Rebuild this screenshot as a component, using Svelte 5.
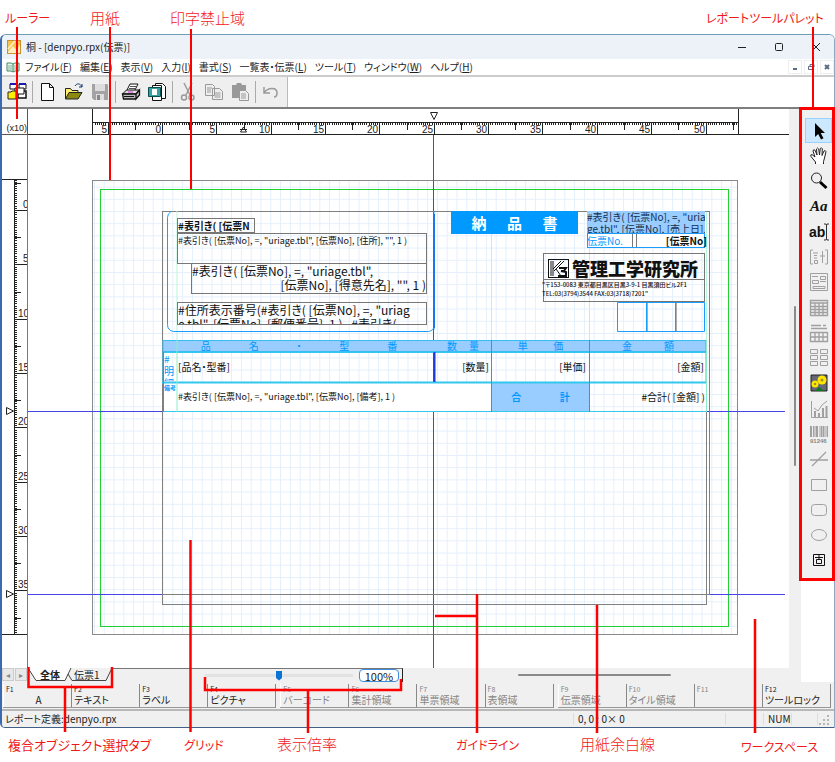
<script>
  const menus = [
    ['ファイル', 'F'], ['編集', 'E'], ['表示', 'V'], ['入力', 'I'], ['書式', 'S'],
    ['一覧表・伝票', 'L'], ['ツール', 'T'], ['ウィンドウ', 'W'], ['ヘルプ', 'H']
  ];

  const keyGroups = [
    [['F1', 'A', 'center'], ['F2', 'テキスト', ''], ['F3', 'ラベル', ''], ['F4', 'ピクチャ', '']],
    [['F5', 'バーコード', 'off'], ['F6', '集計領域', 'off'], ['F7', '単票領域', 'off'], ['F8', '表領域', 'off']],
    [['F9', '伝票領域', 'off'], ['F10', 'タイル領域', 'off'], ['F11', '', 'off'], ['F12', 'ツールロック', '']]
  ];

  const tools = [
    '選択', '移動', 'ズーム', 'ラベル', 'テキスト', '集計', '単票領域', '表領域', '伝票領域',
    'タイル領域', 'ピクチャ', 'グラフ', 'バーコード', '直線', '四角形', '角丸四角形', '楕円', '固定'
  ];

  // Ruler geometry: one numbered step is five units, with 25 small ticks in it.
  const step = 54.35;
  const hTicks = [];
  for (let i = -32; i <= 264; i++) hTicks.push(162 + (i * step) / 25);
  const hHalf = Array.from({ length: 12 }, (_, i) => 162 + (i - 0.5) * step).filter((x) => x < 738);
  const hMajor = Array.from({ length: 12 }, (_, i) => ({ x: 162 + (i - 1) * step, n: Math.abs((i - 1) * 5) }));
  const vTicks = [];
  for (let i = -14; i <= 195; i++) vTicks.push(210 + (i * step) / 25);
  const vMajor = Array.from({ length: 8 }, (_, i) => ({ y: 210 + i * step, n: i * 5 }));
  const vHalf = Array.from({ length: 9 }, (_, i) => 210 + (i - 0.5) * step).filter((y) => y < 634);

  // Text objects of the report: x, y, width, height on the design surface.
  const objects = [
    { x: 177, y: 218, w: 78, h: 15, c: 'f10 bold boxed', t: ['#表引き( [伝票N'] },
    { x: 177, y: 233, w: 250, h: 31, c: 'f9 boxed', t: ['#表引き( [伝票No], =, "uriage.tbl", [伝票No], [住所], "", 1 )'] },
    { x: 191, y: 263, w: 236, h: 31, c: 'f12 boxed', t: ['#表引き( [伝票No], =, "uriage.tbl",'], r: '[伝票No], [得意先名], "", 1 )' },
    { x: 177, y: 302, w: 250, h: 23, c: 'f12 boxed', t: ['#住所表示番号(#表引き( [伝票No], =, "uriag', 'e.tbl", [伝票No], [郵便番号], 1 ) , #表引き('] },
    { x: 451, y: 211, w: 127, h: 23, c: 'title', t: ['納', '品', '書'] },
    { x: 587, y: 211, w: 118, h: 22, c: 'f10 date', t: ['#表引き( [伝票No], =, "uria', 'ge.tbl", [伝票No], [売上日],'] },
    { x: 587, y: 234, w: 45, h: 13, c: 'f10 blue', t: ['伝票No.'] },
    { x: 637, y: 234, w: 70, h: 13, c: 'f10 bold right', t: ['[伝票No]'] },
    { x: 572, y: 257, w: 132, h: 23, c: 'company', t: ['管理工学研究所'] },
    { x: 542, y: 280, w: 164, h: 10, c: 'f6', t: ['"〒153-0083 東京都目黒区目黒3-9-1 目黒須田ビル2F1'] },
    { x: 542, y: 289, w: 164, h: 10, c: 'f6', t: ['TEL:03(3794)3544 FAX:03(3718)7201"'] },
    { x: 163, y: 341, w: 272, h: 10, c: 'head', t: ['品', '名', '・', '型', '番'] },
    { x: 435, y: 341, w: 56, h: 10, c: 'head', t: ['数', '量'] },
    { x: 492, y: 341, w: 97, h: 10, c: 'head', t: ['単', '価'] },
    { x: 590, y: 341, w: 116, h: 10, c: 'head', t: ['金', '額'] },
    { x: 164, y: 353, w: 13, h: 28, c: 'side', t: ['#', '明', '細'] },
    { x: 178, y: 353, w: 200, h: 28, c: 'f10 cell', t: ['[品名・型番]'] },
    { x: 440, y: 353, w: 49, h: 28, c: 'f10 cell right', t: ['[数量]'] },
    { x: 500, y: 353, w: 86, h: 28, c: 'f10 cell right', t: ['[単価]'] },
    { x: 600, y: 353, w: 104, h: 28, c: 'f10 cell right', t: ['[金額]'] },
    { x: 164, y: 383, w: 13, h: 9, c: 'f6 blue bold', t: ['備考'] },
    { x: 178, y: 383, w: 300, h: 28, c: 'f9 cell', t: ['#表引き( [伝票No], =, "uriage.tbl", [伝票No], [備考], 1 )'] },
    { x: 492, y: 383, w: 97, h: 28, c: 'sum', t: ['合', '計'] },
    { x: 600, y: 383, w: 105, h: 28, c: 'f10 cell right', t: ['#合計( [金額] )'] }
  ];

  const captions = [
    { x: 5, y: 8, t: 'ルーラー', c: 'kana' }, { x: 90, y: 8, t: '用紙' }, { x: 170, y: 8, t: '印字禁止域' },
    { x: 706, y: 8, t: 'レポートツールパレット', c: 'kana' }, { x: 8, y: 735, t: '複合オブジェクト選択タブ', c: 'mixed' },
    { x: 184, y: 735, t: 'グリッド', c: 'kana' }, { x: 277, y: 734, t: '表示倍率' },
    { x: 456, y: 735, t: 'ガイドライン', c: 'kana' }, { x: 580, y: 734, t: '用紙余白線' },
    { x: 741, y: 737, t: 'ワークスペース', c: 'kana' }
  ];

  let zoom = $state(100);
  let active = $state(0);
</script>

<div class="page">
  <div class="window">
    <header class="titlebar">
      <svg width="14" height="14" viewBox="0 0 14 14"><rect x=".5" y=".5" width="13" height="13" fill="#f7c64c" stroke="#c8912c" /><path d="M1 12 6 6l3 4 4-5v8H1z" fill="#fff1c4" /><path d="M1 9 8 1" stroke="#fff3d0" stroke-width="1.5" /></svg>
      <span class="name">桐 - [denpyo.rpx(伝票)]</span>
      <div class="winbtns">
        <button aria-label="最小化"><svg width="10" height="10" viewBox="0 0 10 10"><path d="M1 5.5h8" /></svg></button>
        <button aria-label="最大化"><svg width="10" height="10" viewBox="0 0 10 10"><rect x="1.5" y="1.5" width="7" height="7" rx="1" /></svg></button>
        <button aria-label="閉じる"><svg width="10" height="10" viewBox="0 0 10 10"><path d="m1 1 8 8M9 1 1 9" /></svg></button>
      </div>
    </header>

    <nav class="menubar">
      <svg width="14" height="12" viewBox="0 0 14 12"><path d="M1 2h4l2 1 2-1h4v8H9l-2 1-2-1H1zM7 3v8" fill="#e9f6ee" stroke="#3f8a62" /><path d="M3 4v5M5 4v5M9 4v5M11 4v5" stroke="#86b79c" /></svg>
      {#each menus as [label, key]}
        <button>{label}(<u>{key}</u>)</button>
      {/each}
      <div class="mdi">
        <button aria-label="子ウィンドウ最小化"><svg width="8" height="8" viewBox="0 0 8 8"><path d="M2 6h4" /></svg></button>
        <button aria-label="子ウィンドウ復元"><svg width="8" height="8" viewBox="0 0 8 8"><path d="M3 3V1.5h4V4H6M1.5 3.5h4v3h-4z" stroke-width="1" /></svg></button>
        <button aria-label="子ウィンドウを閉じる"><svg width="8" height="8" viewBox="0 0 8 8"><path d="m2 2 4 4M6 2 2 6" /></svg></button>
      </div>
    </nav>

    <div class="toolbar">
      <div class="tools">
        <button aria-label="ウィンドウ選択"><svg width="20" height="20" viewBox="0 0 20 20"><path d="M3 2h7v5H3zM12 2h7v5h-7z" fill="#fff" stroke="#111" /><path d="M3 1h7v2H3zM12 1h7v2h-7z" fill="#1a1ab0" /><path d="M11 9h8v7h-8z" fill="#fff" stroke="#111" stroke-width="1.5" /><path d="M8 6h9v6H8z" fill="#fff" stroke="#111" /><path d="M1 10h3l1-1h4v8H1z" fill="#ffee00" stroke="#222" /></svg></button>
        <i></i>
        <button aria-label="新規"><svg width="20" height="20" viewBox="0 0 20 20"><path d="M3.500 1.500h8l4 4v13h-12zM11.500 1.500v4h4" fill="#fff" stroke="#111" /></svg></button>
        <button aria-label="開く"><svg width="20" height="20" viewBox="0 0 20 20"><path d="M1.500 17V6.500h5l1.500 2h6V11" fill="#ffef70" stroke="#222" /><path d="m1.500 17 3.500-6.500h13L14 17z" fill="#8a8a10" stroke="#222" /><path d="M11 4c2-3 5-3 7 1m0-3v3h-3" fill="none" stroke="#103070" /></svg></button>
        <button aria-label="保存" disabled><svg width="20" height="20" viewBox="0 0 20 20"><path d="M2 2h15l1 1v15H4l-2-2z" fill="#a3a3a3" /><path d="M5 2h10v7H5zM6 12h8v6H6z" fill="#ddd" /><path d="M7 13h3v5H7z" fill="#888" /></svg></button>
        <i></i>
        <button aria-label="印刷"><svg width="20" height="20" viewBox="0 0 20 20"><path d="M6 8 9 2h8l-3 6" fill="#fff" stroke="#111" /><path d="m9 4.500 6 0M8 6.500h6" stroke="#555" /><path d="m1.500 12 4-4H18l-3 4z" fill="#ddd" stroke="#111" /><path d="M1.500 12H15v5H2.500zM15 12l3.500-4v5L15 17z" fill="#bbb" stroke="#111" stroke-width="1.300" /><path d="M3 14.500h10" stroke="#111" /><path d="M7 10h5" stroke="#d33ad3" /></svg></button>
        <button aria-label="プレビュー"><svg width="20" height="20" viewBox="0 0 20 20"><path d="M8.500 1.500h7l3 3v12h-10z" fill="#fff" stroke="#111" /><path d="M5.500 3.500h9v15h-9z" fill="#fff" stroke="#111" /><path d="M1.500 5.500h12v9h-12z" fill="#38a0a0" stroke="#0a5050" /><path d="M5 7h5v6H5z" fill="#fff" /></svg></button>
        <i></i>
        <button aria-label="切り取り" disabled><svg width="20" height="20" viewBox="0 0 20 20" fill="none" stroke="#9a9a9a" stroke-width="1.500"><path d="M6 1l6 12M14 1 8 13" /><circle cx="6" cy="15.500" r="2.500" /><circle cx="13.500" cy="15.500" r="2.500" /></svg></button>
        <button aria-label="コピー" disabled><svg width="20" height="20" viewBox="0 0 20 20" fill="#eee" stroke="#9a9a9a"><path d="M1.500 2.500h7l2 2v9h-9zM8.500 6.500h7l3 3v8h-10z" /><path d="M3 6h5M3 8h4M3 10h4M10.500 11h6M10.500 13h6M10.500 15h6" /></svg></button>
        <button aria-label="貼り付け" disabled><svg width="20" height="20" viewBox="0 0 20 20"><path d="M2 3h4l1-2h4l1 2h4v13H2z" fill="#999" /><path d="M9.500 8.500h6l3 3v7h-9z" fill="#eee" stroke="#999" /><path d="M11 12h5M11 14h5M11 16h5" stroke="#999" /></svg></button>
        <i></i>
        <button aria-label="元に戻す" disabled><svg width="20" height="20" viewBox="0 0 20 20" fill="none" stroke="#9a9a9a" stroke-width="1.500"><path d="M3 5v6h6M3 11c4-6 13-6 13 0 0 2-1 4-3 4" /></svg></button>
      </div>
    </div>

    <div class="work">
      <main class="designer">
        <div class="hrow">
          <div class="corner">(x10)</div>
          <div class="hruler">
            <svg width="760" height="26" viewBox="28 109 760 26" shape-rendering="crispEdges">
              <path d="M92.500 109v25M738.500 109v25M92 122.500h646" class="rule" />
              {#each hTicks as x}<path d="M{Math.round(x) + 0.5} 122v3" class="rule" />{/each}
              {#each hHalf as x}<path d="M{Math.round(x) + 0.5} 122v8" class="rule" />{/each}
              {#each hMajor as m}
                <path d="M{Math.round(m.x) + 0.5} 122v12" class="rule" />
                <text x={Math.round(m.x) - 1} y="133" text-anchor="end">{m.n}</text>
              {/each}
              <path d="M430.500 112.500h7l-3.500 7z" class="mark" />
              <path d="M240.500 132h6l-3-5zM240 129.500h7" class="mark" />
            </svg>
          </div>
        </div>

        <div class="mid">
          <div class="vruler">
            <svg width="26" height="533" viewBox="2 135 26 533" shape-rendering="crispEdges">
              <path d="M2 179.500h26M2 634.500h26M14.500 179v455" class="rule" />
              {#each vTicks as y}<path d="M14 {Math.round(y) + 0.5}h3" class="rule" />{/each}
              {#each vHalf as y}<path d="M14 {Math.round(y) + 0.5}h7" class="rule" />{/each}
              {#each vMajor as m}
                <path d="M14 {Math.round(m.y) + 0.5}h14" class="rule" />
                <text x={m.n < 10 ? 23 : 18} y={Math.round(m.y) - 2}>{m.n}</text>
              {/each}
              <path d="M6.500 407.500v7l7-3.500zM6.500 590.500v7l7-3.500z" class="mark" />
            </svg>
          </div>

          <div class="canvas">
            <svg class="surface" width="760" height="533" viewBox="28 135 760 533" fill="none">
              <defs>
                <pattern id="grid" x="162.500" y="211" width="9.800" height="12.200" patternUnits="userSpaceOnUse">
                  <path d="M.5 0v12.200M0 .5h9.800" stroke="#e4effc" />
                </pattern>
              </defs>
              <rect x="92.500" y="180.500" width="645" height="454" fill="url(#grid)" stroke="#8a8a8a" />
              <rect x="100.500" y="189.500" width="628" height="437" stroke="#22d233" />
              <path d="M28 411.500h757M28 594.500h757M433.500 135v533" stroke="#4646e8" />
              <rect x="162.500" y="211.500" width="544" height="393" stroke="#808080" />
              <path d="M162 594.500h547M709.500 211v384M706 211.500h3" stroke="#808080" />
              <path d="M177 211v130M491.500 233v107M589.500 248v92M706.500 212v128" stroke="#b6f5d8" />

              <path d="M171 211.500q-3.500 2-3.500 6v107q0 6 6 7h255q5-1 5.500-5M434 211v119" stroke="#1a9cff" />
              <path d="M434 214v114" stroke="#1478f0" stroke-width="2" />
              <rect x="587.500" y="233.500" width="117" height="14" fill="#fff" stroke="#1a9cff" />
              <path d="M632.500 234v13M636.500 234v13" stroke="#777" />
              <rect x="543.500" y="253.500" width="161" height="48" stroke="#777" />
              <path d="M543 279.500h161" stroke="#777" />
              <g stroke="#111">
                <rect x="548.500" y="259.500" width="20" height="18" />
                <path d="M551 261v15M553 261v15M553 269l8-8M554 271l10-10M556 269l5 7" />
                <path d="M559 268h7l-2 3h-3l5 1v4h-8" stroke-width="2" />
              </g>
              <path d="M617.500 302.500h87v29h-87zM646.500 302v29M675.500 302v29" stroke="#1a9cff" />
              <path d="M647.500 302v29M676.500 302v29" stroke="#777" stroke-opacity=".6" />

              <rect x="163" y="340.500" width="543" height="11" fill="#99ccff" stroke="#35bdf5" />
              <rect x="163" y="352.500" width="543" height="30" stroke="#35c8ee" />
              <path d="M163 383h328v28H163z" fill="#fff" />
              <path d="M492 383h97v28h-97z" fill="#99ccff" />
              <path d="M162 382.500h545" stroke="#35c8ee" stroke-width="2" />
              <path d="M163 411.500h543" stroke="#35c8ee" />
              <path d="M706.500 340v72M177 340v72" stroke="#8cecc8" />
              <path d="M163.500 352v60M491.500 340v72M589.500 340v72" stroke="#1a9cff" />
              <path d="M434.500 352v30" stroke="#2038e0" stroke-width="2" />
            </svg>
            {#each objects as o}
              <div class="obj {o.c}" style="left:{o.x - 28}px;top:{o.y - 135}px;width:{o.w}px;height:{o.h}px">
                {#each o.t as line}<span>{line}</span>{/each}
                {#if o.r}<span class="second">{o.r}</span>{/if}
              </div>
            {/each}
          </div>
        </div>

        <div class="bottom">
          <div class="navs"><button aria-label="前のタブ">◂</button><button aria-label="次のタブ">▸</button></div>
          <div class="tabs">
            <svg width="85" height="14" viewBox="0 0 85 14"><path d="M0 0 8 12.500h29L44 0z" fill="#fff" /><path d="M0 0 8 12.500h29L43 0" fill="none" stroke="#444" /><path d="m40 6 4 6.500h34L84 0" fill="none" stroke="#444" /></svg>
            <button class="t1">全体</button><button class="t2">伝票1</button>
          </div>
          <div class="zoomer">
            <input type="range" min="0" max="200" bind:value={zoom} aria-label="表示倍率" />
            <button class="pct">{zoom}%</button>
          </div>
          <div class="hscroll"><b></b></div>
        </div>
      </main>

      <div class="vscroll"><b></b></div>

      <aside class="palette">
        <div class="strip">
          {#each tools as name, i}
            <button aria-label={name} class:on={active === i} onclick={() => (active = i)}>
              <svg width="20" height="20" viewBox="0 0 20 20" fill="none" stroke="#a0a0a0">
                {#if i === 0}<path d="M6 2v14l3.200-3 2.800 5.500 2.500-1.200-2.800-5.300H16z" fill="#000" stroke="none" />
                {:else if i === 1}<path d="M6.500 18v-2L2 10.500q-.8-2 1-2L6 11 4 5q.3-2 2-.8L8 9 7.500 3q1-2 2.200 0l.8 6 .8-6.500q1.200-1.500 2 .3l-.3 6.700L15 5q1.500-1 2 .6L15.500 12l-1 3.500V18" fill="#fff" stroke="#222" />
                {:else if i === 2}<circle cx="7.500" cy="7" r="5" stroke="#222" /><path d="m11 11 6.500 6" stroke="#000" stroke-width="3" />
                {:else if i === 3}<text x="1" y="15" class="aa">Aa</text>
                {:else if i === 4}<text x="0" y="15" class="ab">ab</text><path d="M15 2h2l.5 1 .5-1h2M17.500 3v14M15 18h2l.5-1 .5 1h2" stroke="#333" />
                {:else if i === 5}<path d="M4 3H1.500v14H4M16 3h2.500v14H16M4 6h5M5 8.500h3M5 11h3M5.500 13.500h3v3h-3zM11 9h5M13.500 4v12" />
                {:else if i === 6}<path d="M1.500 1.500h17v17h-17zM3 4.500h6M3.500 8.500h6v3h-6zM11.500 4.500h5v3h-5zM11 9.500h6M4 14.500h12v2H4z" />
                {:else if i === 7}<path d="M1.500 2.500h17v15h-17zM1.500 5h17M1.500 8.500h17M1.500 11.500h17M1.500 14.500h17M6 5v12M10 5v12M14 5v12" stroke-width="1.300" />
                {:else if i === 8}<path d="M2 2.500h10M14 2.500h3M2 5.500h16M1.500 9.500h17v9h-17zM1.500 14h17M6 9v9M10 9v9M14 9v9" stroke-width="1.300" />
                {:else if i === 9}<path d="M1.500 1.500h7v4h-7zM11.500 1.500h7v4h-7zM1.500 7.500h7v4h-7zM11.500 7.500h7v4h-7zM1.500 13.500h7v4h-7zM11.500 13.500h7v4h-7z" />
                {:else if i === 10}<path d="M2 2h16v16H2z" fill="#667" stroke="#222" /><circle cx="13" cy="7" r="4.500" fill="#ffe600" stroke="none" /><circle cx="6" cy="11" r="3.500" fill="#ffe600" stroke="none" /><circle cx="13" cy="7" r="1.500" fill="#a09030" stroke="none" /><circle cx="6" cy="11" r="1.200" fill="#a09030" stroke="none" /><path d="m6 18 4-4 5 4z" fill="#0b7a1a" stroke="none" />
                {:else if i === 11}<path d="M2.500 2v16.500H19M5 9l4 3 4-6 5-4" /><path d="M6 12v6M10 14v4M14 9v9M17.500 7v11" stroke-width="2" />
                {:else if i === 12}<path d="M2 2v11M8 2v11M14.500 2v11" stroke-width="2" /><path d="M4.500 2v11M6 2v11M11 2v11M12.500 2v11M17 2v11M18.500 2v11" /><text x="1" y="19" class="code">91246</text>
                {:else if i === 13}<path d="M1 11h18M3 17 17 3" stroke-width="1.300" />
                {:else if i === 14}<path d="M2.500 4.500h15v11h-15z" />
                {:else if i === 15}<rect x="2.500" y="4.500" width="15" height="11" rx="3" />
                {:else if i === 16}<ellipse cx="10" cy="10" rx="7.500" ry="5.500" />
                {:else}<path d="M4.500 4.500h11v11h-11zM6 7.500h8M10 5v4M7.500 9.500h5v4h-5z" stroke="#111" />{/if}
              </svg>
            </button>
          {/each}
        </div>
      </aside>
    </div>

    <div class="keys">
      {#each keyGroups as group}
        <div class="group">
          {#each group as [key, label, look]}
            <button class={look} disabled={look === 'off'}><small>{key}</small><span>{label}</span></button>
          {/each}
        </div>
      {/each}
    </div>

    <footer class="status">
      <span class="doc">レポート定義:denpyo.rpx</span>
      <span class="pos">0, 0 : 0× 0</span>
      <span class="gap1"></span><span class="num">NUM</span><span class="gap2"></span>
      <svg width="13" height="14" viewBox="0 0 13 14" fill="#b4b4b4"><path d="M9 3h2v2H9zM9 7h2v2H9zM5 7h2v2H5zM9 11h2v2H9zM5 11h2v2H5zM1 11h2v2H1z" /></svg>
    </footer>
  </div>

  <div class="notes">
    <svg width="835" height="762" viewBox="0 0 835 762" fill="none" stroke="#f00" stroke-width="2">
      <path d="M17 27v92M110 27v153M191 29v160M813 27v81" />
      <path d="M28.500 667v20H112v-20M65 687v45" stroke-width="2.500" />
      <path d="M190.500 540v192M205 677v13h196v-11M308 690v43M435 616h42M477 594v139M597 605v128M755 619v114" stroke-width="2.500" />
      <rect x="800.500" y="108.500" width="33" height="471" stroke-width="3" />
    </svg>
    {#each captions as c}<span class={c.c} style="left:{c.x}px;top:{c.y}px">{c.t}</span>{/each}
  </div>
</div>

<style>
  :global(body) { margin: 0; background: #fff; }
  .page {
    position: relative; padding: 34px 0; overflow: hidden;
    font-family: "Noto Sans CJK JP", "Liberation Sans", sans-serif;
    font-feature-settings: "palt"; font-size: 10px; line-height: 12px; color: #222;
  }
  button {
    border: 0; padding: 0; margin: 0; background: none; color: inherit;
    font: inherit; font-feature-settings: inherit; display: flex; align-items: center; justify-content: center;
  }
  svg { display: block; flex: none; }
  .window {
    border-top: 1px solid #6f9fb8; border-right: 1px solid #8fa9bd; border-bottom: 1px solid #3f5f86;
    border-left: 2px solid #3a6ab0; border-radius: 6px 6px 0 5px; overflow: hidden; background: #fff;
  }

  .titlebar { display: flex; align-items: center; height: 24px; background: #edf2f8; padding-left: 5px; gap: 5px; }
  .name { flex: 1; color: #222; }
  .winbtns { display: flex; }
  .winbtns button { width: 37px; height: 24px; }
  .winbtns svg { stroke: #222; fill: none; }

  .menubar { display: flex; align-items: center; height: 16px; gap: 8px; padding: 0 0 0 4px; border-bottom: 2px solid #ccc; }
  .menubar > svg { margin-right: -3px; }
  .mdi { display: flex; gap: 2px; margin-left: auto; }
  .mdi button { width: 14px; height: 14px; border: 1px solid #eee; box-sizing: border-box; }
  .mdi svg { fill: none; stroke: #5a6d88; stroke-width: 2; }

  .toolbar { border-bottom: 2px solid #7f7f7f; }
  .tools { display: flex; align-items: center; gap: 6px; width: 280px; height: 30px; background: #efefef; padding-left: 5px; border-right: 1px solid #bbb; }
  .tools i { width: 1px; height: 22px; background: #aaa; margin: 0 -1px; }

  .work { display: flex; }
  .designer { flex: 1; min-width: 0; }
  .hrow { display: flex; }
  .corner { width: 25px; height: 25px; border-right: 1px solid #555; border-bottom: 1px solid #555; display: flex; align-items: flex-end; justify-content: flex-end; font-family: "Liberation Sans", sans-serif; font-size: 9px; line-height: 11px; }
  .hruler { flex: 1; overflow: hidden; border-bottom: 1px solid #222; height: 25px; }
  .rule { stroke: #222; fill: none; }
  .mark { stroke: #222; fill: #fff; shape-rendering: auto; }
  .hruler text, .vruler text { font: 10px "Liberation Sans", sans-serif; fill: #222; }
  .mid { display: flex; }
  .vruler { width: 25px; border-right: 1px solid #777; overflow: hidden; }
  .canvas { position: relative; flex: 1; overflow: hidden; }

  .obj { position: absolute; box-sizing: border-box; overflow: hidden; white-space: nowrap; color: #111; }
  .obj span { display: block; }
  .boxed { border: 1px solid #777; }
  .f6 { font-size: 6px; line-height: 9px; font-weight: 500; }
  .f9 { font-size: 9px; line-height: 13px; }
  .f10 { font-size: 10px; line-height: 13px; }
  .f12 { font-size: 12px; line-height: 14px; }
  .bold { font-weight: 700; }
  .blue { color: #0099ff; }
  .right, .second { text-align: right; }
  .cell { line-height: 28px; }
  .date { background: #99ccff; color: #123050; line-height: 12px; }
  .title, .head, .sum { display: flex; align-items: center; justify-content: space-evenly; color: #0099ff; line-height: 10px; }
  .title { background: #0099ff; color: #fff; font-size: 15px; font-weight: 700; }
  .sum { font-weight: 700; justify-content: space-around; }
  .company { font-size: 18px; line-height: 23px; font-weight: 900; }
  .side { color: #0099ff; font-size: 10px; line-height: 12px; }

  .bottom { display: flex; height: 14px; background: #f0f0f0; }
  .navs { display: flex; gap: 1px; width: 26px; }
  .navs button { width: 12px; height: 13px; background: #e8e8e8; border: 1px solid #ccc; box-sizing: border-box; color: #888; font-size: 8px; }
  .tabs { position: relative; width: 85px; }
  .tabs button { position: absolute; top: 0; height: 13px; }
  .t1 { left: 12px; font-weight: 700; }
  .t2 { left: 46px; }
  .zoomer { display: flex; align-items: center; gap: 6px; width: 290px; box-sizing: border-box; padding-left: 92px; border-top: 1px solid #777; border-right: 1px solid #222; }
  input { appearance: none; width: 148px; height: 10px; margin: 0; background: linear-gradient(#e2e2e2, #e2e2e2) center / 100% 3px no-repeat; }
  input::-webkit-slider-thumb { appearance: none; width: 6px; height: 10px; background: #0a74d6; clip-path: polygon(0 0, 100% 0, 100% 75%, 50% 100%, 0 75%); }
  .pct { width: 40px; height: 13px; box-sizing: border-box; border: 1px solid #3c8fdc; border-radius: 4px; background: #fff; font-size: 11px; }
  .hscroll { flex: 1; display: flex; align-items: center; padding-left: 115px; }
  .hscroll b { width: 153px; height: 2px; background: #8a8a8a; border-radius: 1px; }
  .vscroll { width: 12px; background: #f0f0f0; padding-top: 197px; display: flex; justify-content: center; }
  .vscroll b { width: 2px; height: 160px; background: #8a8a8a; border-radius: 1px; }

  .palette { width: 33px; }
  .strip { display: grid; grid-auto-rows: 1fr; height: 455px; background: #f0f0f0; padding: 9px 2px 8px 4px; }
  .strip button { width: 27px; box-sizing: border-box; }
  .strip .on { background: #cce8ff; border: 1px solid #99d1ff; }
  .aa { font: italic 700 15px "Liberation Serif", serif; fill: #111; stroke: none; }
  .ab { font: 700 14px "Liberation Sans", sans-serif; fill: #111; stroke: none; }
  .code { font: 700 6px "Liberation Sans", sans-serif; fill: #888; stroke: none; }

  .keys { display: flex; gap: 4px; background: #f0f0f0; padding: 2px 3px 1px 1px; }
  .group { flex: 1; display: flex; border-bottom: 1px solid #999; border-right: 1px solid #888; }
  .group button { flex: 1 1 0; min-width: 0; display: block; height: 23px; text-align: left; padding-left: 2px; border-left: 1px solid #888; box-sizing: border-box; }
  .group button:first-child { border-left-color: #fff; }
  .group small { display: block; font-size: 7px; line-height: 9px; }
  .group span { display: block; height: 12px; line-height: 12px; }
  .group .center span { text-align: center; }
  .group .off { color: #858585; }

  .status { display: flex; align-items: center; height: 16px; background: #f0f0f0; border-top: 2px solid #b8b8b8; padding-right: 3px; }
  .status span { height: 12px; box-sizing: border-box; }
  .status .doc { flex: 1; padding-left: 3px; }
  .status .pos { width: 152px; padding-left: 4px; border-left: 1px solid #ddd; }
  .status .gap1 { width: 38px; border-left: 1px solid #ddd; }
  .status .num { width: 29px; padding-left: 4px; border-left: 1px solid #ddd; border-right: 1px solid #ddd; }
  .status .gap2 { width: 26px; border-right: 1px solid #ddd; }

  .notes { position: absolute; inset: 0; pointer-events: none; color: #f01818; font-size: 15px; line-height: 20px; }
  .notes svg { position: absolute; left: 0; top: 0; }
  .notes span { position: absolute; white-space: nowrap; font-weight: 300; }
  .notes .kana { font-size: 12px; font-weight: 400; }
  .notes .mixed { font-size: 13px; font-weight: 400; }
</style>
